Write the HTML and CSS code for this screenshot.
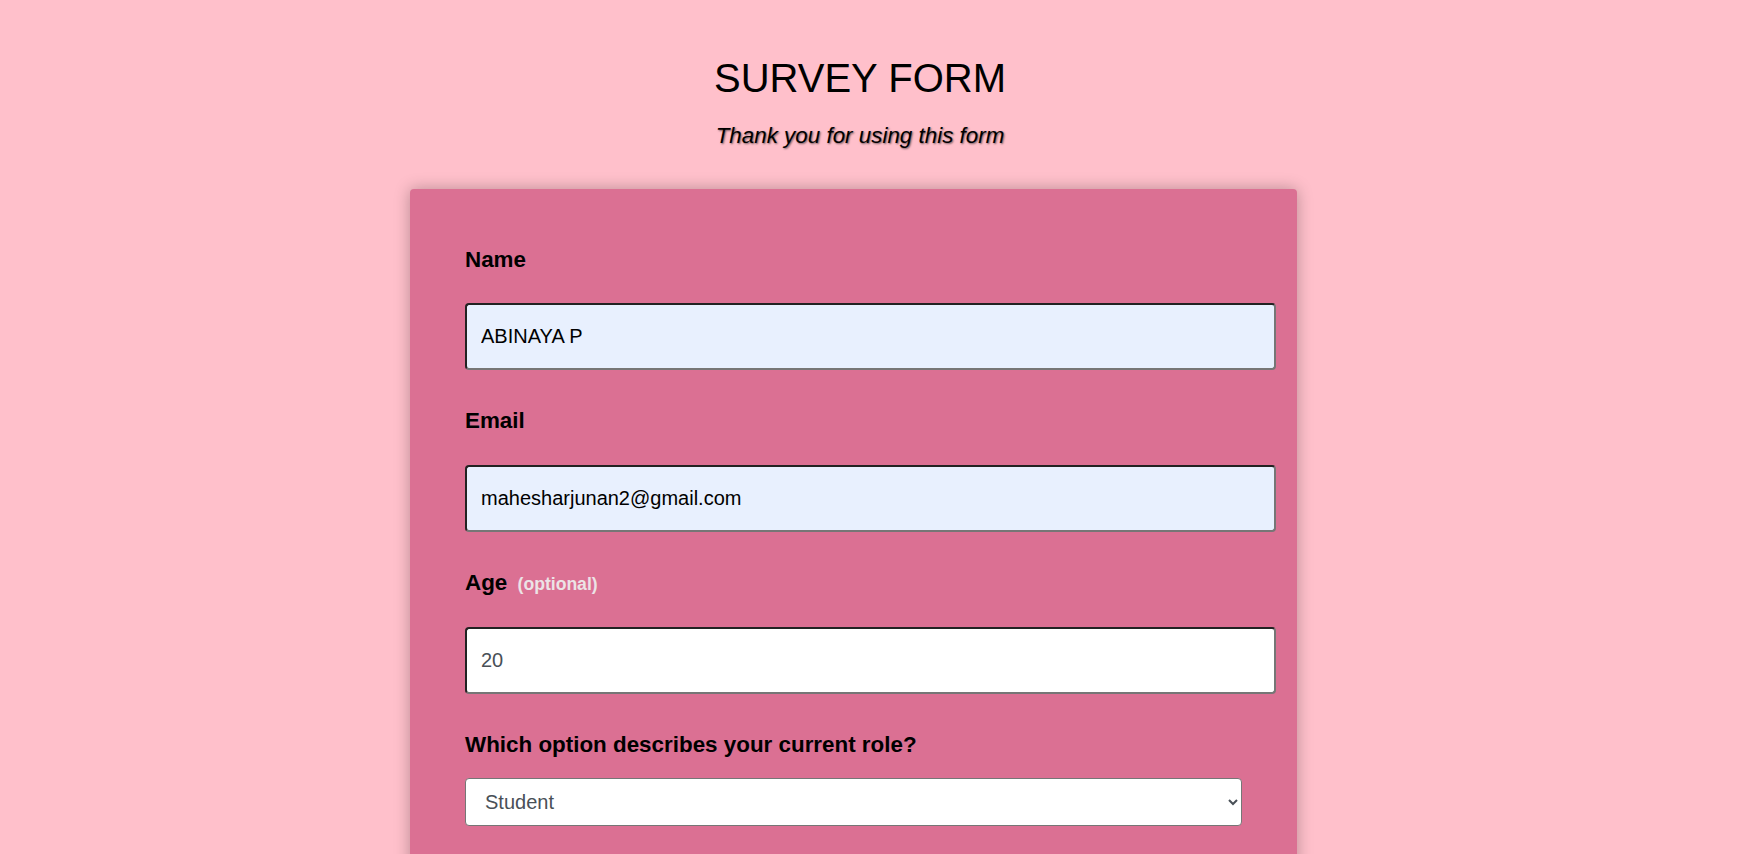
FILE: index.html
```html
<!DOCTYPE html>
<html lang="en">
<head>
<meta charset="utf-8">
<title>Survey Form</title>
<link rel="stylesheet" href="styles.css">
</head>
<body>
<header class="header">
  <h1 class="title" id="title">SURVEY FORM</h1>
  <p class="description" id="description">Thank you for using this form</p>
</header>
<main class="wrap">
  <form class="card" id="survey-form">
    <div class="group">
      <label class="label" for="name">Name</label>
      <input class="field autofill" id="name" type="text" value="ABINAYA P">
    </div>
    <div class="group">
      <label class="label" for="email">Email</label>
      <input class="field autofill" id="email" type="email" value="mahesharjunan2@gmail.com">
    </div>
    <div class="group">
      <label class="label" for="number">Age <span class="hint">(optional)</span></label>
      <input class="field plain" id="number" type="text" value="20">
    </div>
    <div class="group">
      <label class="label" for="dropdown">Which option describes your current role?</label>
      <select class="select" id="dropdown">
        <option>Student</option>
        <option>Full Time Job</option>
        <option>Full Time Learner</option>
        <option>Prefer not to say</option>
        <option>Other</option>
      </select>
    </div>
  </form>
</main>
</body>
</html>
```
FILE: styles.css
```css
html, body {
  margin: 0;
  padding: 0;
}

body {
  background: #ffc0cb;
  font-family: "Liberation Sans", Arial, sans-serif;
  color: #000;
}

.header {
  text-align: center;
  padding: 56px 20px 0 0;
}

.title {
  margin: 0;
  font-size: 40px;
  font-weight: 400;
  line-height: 1.12;
}

.description {
  margin: 22px 0 0;
  font-size: 22.4px;
  font-style: italic;
  line-height: 1.15;
  text-shadow: 1px 1px 2px rgba(0, 0, 0, 0.55);
}

.wrap {
  display: flex;
  justify-content: center;
  padding: 40px 33px 0 0;
}

.card {
  box-sizing: border-box;
  width: 887px;
  background: #db7093;
  border-radius: 4px;
  padding: 58px 21px 120px 55px;
  box-shadow: 0 0 16px rgba(0, 0, 0, 0.28);
}

.group {
  margin-bottom: 38px;
}

.label {
  display: block;
  font-size: 22.4px;
  font-weight: 700;
  line-height: 1.2;
  margin-bottom: 30px;
}

.hint {
  font-size: 17.6px;
  color: #ece3e6;
  margin-left: 4px;
}

.field {
  display: block;
  box-sizing: border-box;
  width: 100%;
  height: 67px;
  padding: 0 14px;
  margin: 0;
  font-family: "Liberation Sans", Arial, sans-serif;
  font-size: 20px;
  border-width: 2px;
  border-style: solid;
  border-color: #222 #767676 #767676 #222;
  border-radius: 4px;
  outline: none;
}

.autofill {
  background: #e8f0fe;
  color: #000;
}

.plain {
  background: #fff;
  color: #495057;
}

.group:last-child .label {
  margin-bottom: 19px;
}

.select {
  display: block;
  box-sizing: border-box;
  width: calc(100% - 34px);
  height: 48px;
  padding: 0 12px 0 15px;
  font-family: "Liberation Sans", Arial, sans-serif;
  font-size: 20px;
  color: #495057;
  background-color: #fff;
  border: 1px solid #767676;
  border-radius: 4px;
}
```
